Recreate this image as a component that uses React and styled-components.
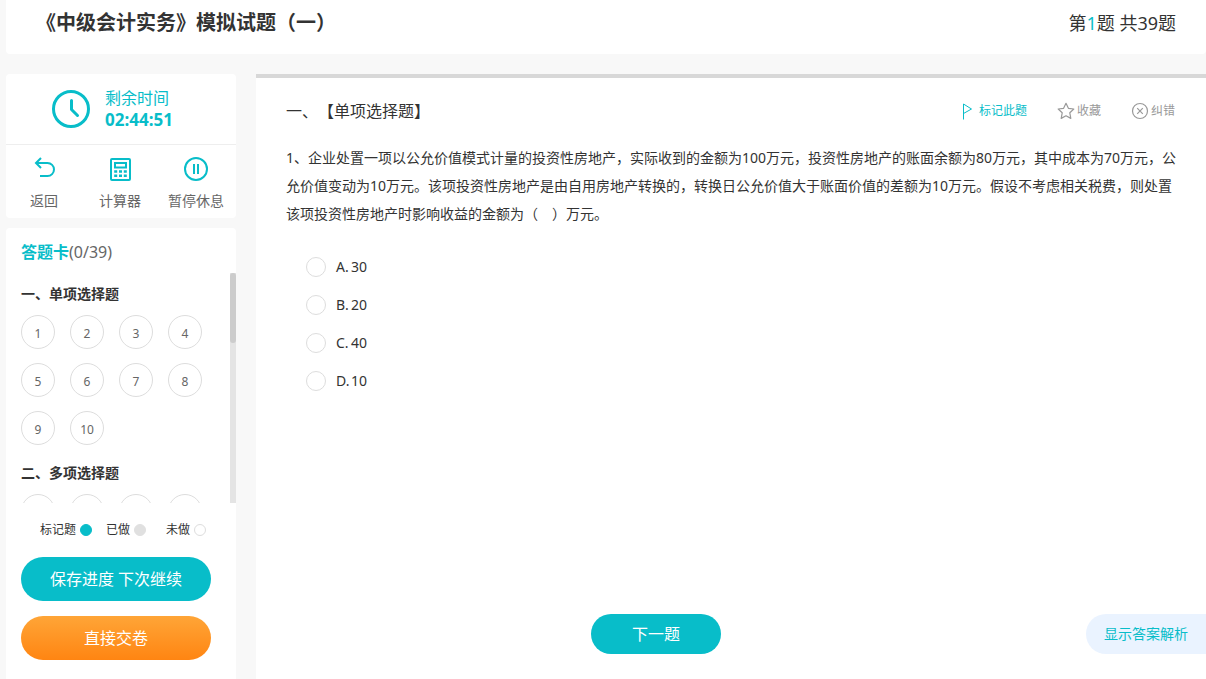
import React, { useEffect, useRef, useState } from 'react';
import styled, { createGlobalStyle } from 'styled-components';

const GlobalStyle = createGlobalStyle`
    * {
        box-sizing: border-box;
    }

    body {
        margin: 0;
        background: #f8f8f8;
        color: #333;
        font-family: "Noto Sans", "Noto Sans CJK SC", sans-serif;
        font-size: 14px;
        text-spacing-trim: space-all;
    }

    button, input {
        font-family: inherit;
        margin: 0;
    }
`;

const Page = styled.div`
    display: flex;
    flex-direction: column;
    min-height: 100vh;
    padding-left: 6px;
`;

const Header = styled.header`
    display: flex;
    justify-content: space-between;
    padding: 0 30px 8px;
    background: #fff;
    border-radius: 0 0 4px 4px;
    line-height: 46px;
`;

const Title = styled.h1`
    margin: 0;
    font-size: 20px;
    font-weight: bold;
`;

const Progress = styled.div`
    font-size: 18px;

    span {
        color: #08bdc9;
    }
`;

const Body = styled.div`
    display: flex;
    flex: 1;
    gap: 20px;
    margin-top: 20px;
`;

const Sidebar = styled.aside`
    display: flex;
    flex-direction: column;
    flex: 0 0 230px;
    gap: 10px;
`;

const Card = styled.section`
    flex: ${(props) => (props.$grow ? 1 : 'none')};
    background: #fff;
    border-radius: ${(props) => (props.$grow ? '4px 4px 0 0' : '4px')};
`;

const Timer = styled.div`
    display: flex;
    align-items: center;
    gap: 14px;
    height: 71px;
    padding-left: 45px;
    border-bottom: 1px solid #eee;
    color: #08bdc9;
    font-size: 16px;
    line-height: 21px;

    strong {
        display: block;
        font-size: 17px;
    }
`;

const Tools = styled.div`
    display: grid;
    grid-template-columns: repeat(3, 1fr);
    height: 73px;
    padding-right: 2px;
`;

const ToolButton = styled.button`
    display: flex;
    flex-direction: column;
    align-items: center;
    gap: 9px;
    padding: 11px 0 0;
    border: 0;
    background: none;
    color: #666;
    font-size: 14px;
    line-height: 20px;
    white-space: nowrap;
    cursor: pointer;

    svg {
        color: #08bdc9;
    }
`;

const CardTitle = styled.h2`
    margin: 0;
    padding: 4px 15px 0;
    color: #08bdc9;
    font-size: 16px;
    line-height: 41px;

    span {
        color: #666;
        font-weight: normal;
    }
`;

const ListWrap = styled.div`
    display: flex;
    height: 230px;
`;

const List = styled.div`
    flex: 1;
    padding: 0 0 10px 15px;
    overflow-y: scroll;
    scrollbar-width: none;
`;

const Track = styled.div`
    width: 6px;
    background: #e4e4e4;
`;

const Thumb = styled.div`
    border-radius: 3px;
    background: #ccc;
`;

const Group = styled.div`
    padding-bottom: 7px;

    h3 {
        margin: 0;
        font-size: 14px;
        line-height: 42px;
    }
`;

const Numbers = styled.div`
    display: grid;
    grid-template-columns: repeat(4, 34px);
    gap: 14px 15px;
`;

const NumberButton = styled.button`
    height: 34px;
    padding: 2px 0 0;
    border: 1px solid #ddd;
    border-radius: 50%;
    background: #fff;
    color: #666;
    font-size: 12px;
    cursor: pointer;
`;

const Legend = styled.div`
    display: grid;
    grid-template-columns: 66px 60px 40px;
    padding: 16px 0 16px 34px;
    font-size: 12px;
    line-height: 22px;
`;

const LegendItem = styled.span`
    display: flex;
    align-items: center;
    gap: 4px;
`;

const Dot = styled.i`
    width: 12px;
    height: 12px;
    border: 1px solid ${(props) => props.$border};
    border-radius: 50%;
    background: ${(props) => props.$fill};
`;

const Actions = styled.div`
    display: flex;
    flex-direction: column;
    gap: 15px;
    padding: 0 25px 19px 15px;
`;

const ActionButton = styled.button`
    height: 44px;
    padding: 0 0 2px;
    border: 0;
    border-radius: 22px;
    background: ${(props) => (props.$submit ? 'linear-gradient(#ffa537, #ff8512)' : '#08bdc9')};
    color: #fff;
    font-size: 16px;
    cursor: pointer;
`;

const Main = styled.main`
    display: flex;
    flex: 1;
    flex-direction: column;
    min-width: 0;
    border-top: 4px solid #d8d8d8;
    background: #fff;
`;

const QuestionHead = styled.div`
    display: flex;
    align-items: center;
    justify-content: space-between;
    padding: 21px 31px 21px 30px;

    h2 {
        margin: 0;
        font-size: 16px;
        font-weight: normal;
        line-height: 24px;
    }
`;

const Marks = styled.div`
    display: flex;
    gap: 30px;
`;

const MarkButton = styled.button`
    display: flex;
    align-items: center;
    gap: 2px;
    padding: 0;
    border: 0;
    background: none;
    color: ${(props) => (props.$active ? '#08bdc9' : '#999')};
    font-size: 12px;
    line-height: 18px;
    cursor: pointer;
`;

const Question = styled.p`
    margin: 0;
    padding: 0 28px 0 30px;
    line-height: 28px;
`;

const Options = styled.div`
    display: flex;
    flex-direction: column;
    gap: 18px;
    padding: 29px 50px;
`;

const Option = styled.label`
    display: flex;
    align-items: center;
    align-self: flex-start;
    gap: 10px;
    line-height: 20px;
    cursor: pointer;

    b {
        display: inline-block;
        width: 15px;
        font-weight: normal;
    }
`;

const Radio = styled.input`
    width: 20px;
    height: 20px;
    border: 1px solid #ddd;
    border-radius: 50%;
    background: #fff;
    appearance: none;

    &:checked {
        border: 6px solid #08bdc9;
    }
`;

const Footer = styled.div`
    display: grid;
    grid-template-columns: 1fr 120px;
    gap: 30px;
    margin-top: auto;
    padding-bottom: 25px;
`;

const NextButton = styled.button`
    justify-self: center;
    width: 130px;
    height: 40px;
    padding: 0 0 2px;
    border: 0;
    border-radius: 20px;
    background: #08bdc9;
    color: #fff;
    font-size: 16px;
    cursor: pointer;
`;

const AnswerButton = styled.button`
    height: 40px;
    padding: 0 0 2px;
    border: 0;
    border-radius: 20px 0 0 20px;
    background: #eaf3ff;
    color: #08bdc9;
    font-size: 14px;
    cursor: pointer;
`;

const groups = [
    { title: '一、单项选择题', start: 1, count: 10 },
    { title: '二、多项选择题', start: 11, count: 10 },
    { title: '三、判断题', start: 21, count: 10 },
    { title: '四、计算分析题', start: 31, count: 4 },
    { title: '五、综合题', start: 35, count: 5 },
];

const options = [
    { key: 'A', value: '30' },
    { key: 'B', value: '20' },
    { key: 'C', value: '40' },
    { key: 'D', value: '10' },
];

const ClockIcon = () => (
    <svg width="40" height="40" viewBox="0 0 40 40" fill="none" stroke="currentColor" strokeWidth="3">
        <circle cx="20" cy="20" r="17.5" />
        <path d="M20.5 11.5v9l6 6" strokeLinecap="round" strokeLinejoin="round" />
    </svg>
);

const BackIcon = () => (
    <svg width="26" height="26" viewBox="0 0 26 26" fill="none" stroke="currentColor" strokeWidth="2">
        <path d="M10 2 5 7l5 5M5 7h11.500a6.500 6.500 0 0 1 0 13H9" />
    </svg>
);

const CalculatorIcon = () => (
    <svg width="26" height="26" viewBox="0 0 26 26" fill="none" stroke="currentColor" strokeWidth="2">
        <rect x="4" y="3" width="19" height="21" rx="1" />
        <rect x="8" y="7" width="11" height="4.500" />
        <path d="M7.200 15.500h3M12 15.500h3M16.800 15.500h3M7.200 19.800h3M12 19.800h3M16.800 19.800h3" strokeWidth="2.600" />
    </svg>
);

const PauseIcon = () => (
    <svg width="26" height="26" viewBox="0 0 26 26" fill="none" stroke="currentColor" strokeWidth="2">
        <circle cx="13" cy="13" r="11" />
        <path d="M11 8v10M15 8v10" />
    </svg>
);

const FlagIcon = () => (
    <svg width="18" height="18" viewBox="0 0 18 18" fill="none" stroke="currentColor">
        <path d="M4.500 17.500V2L12.500 7l-8 4.500" />
    </svg>
);

const StarIcon = () => (
    <svg width="18" height="18" viewBox="0 0 18 18" fill="none" stroke="currentColor" strokeWidth="1.200" strokeLinejoin="round">
        <path d="M9 1.300l2.400 5 5.400.7-4 3.800 1 5.600L9 13.800l-4.800 2.600 1-5.600-4-3.800 5.400-.7z" />
    </svg>
);

const WrongIcon = () => (
    <svg width="18" height="18" viewBox="0 0 18 18" fill="none" stroke="currentColor" strokeWidth="1.200">
        <circle cx="9" cy="9" r="7.500" />
        <path d="M6.200 6.200l5.600 5.600M11.800 6.200l-5.600 5.600" />
    </svg>
);

function AnswerList() {
    const listRef = useRef(null);
    const [thumb, setThumb] = useState({ top: 0, height: 0 });

    const updateThumb = () => {
        const { clientHeight, scrollHeight, scrollTop } = listRef.current;
        const ratio = clientHeight / scrollHeight;
        setThumb({ top: scrollTop * ratio, height: clientHeight * ratio });
    };

    useEffect(() => {
        updateThumb();
    }, []);

    return (
        <ListWrap>
            <List ref={listRef} onScroll={updateThumb}>
                {groups.map((group) => (
                    <Group key={group.title}>
                        <h3>{group.title}</h3>
                        <Numbers>
                            {Array.from({ length: group.count }, (_, i) => (
                                <NumberButton key={i} type="button">{group.start + i}</NumberButton>
                            ))}
                        </Numbers>
                    </Group>
                ))}
            </List>
            <Track>
                <Thumb style={{ height: thumb.height, transform: `translateY(${thumb.top}px)` }} />
            </Track>
        </ListWrap>
    );
}

function App() {
    const [answer, setAnswer] = useState('');

    return (
        <Page>
            <GlobalStyle />
            <Header>
                <Title>《中级会计实务》模拟试题（一）</Title>
                <Progress>第<span>1</span>题 共39题</Progress>
            </Header>
            <Body>
                <Sidebar>
                    <Card>
                        <Timer>
                            <ClockIcon />
                            <div>
                                剩余时间
                                <strong>02:44:51</strong>
                            </div>
                        </Timer>
                        <Tools>
                            <ToolButton type="button"><BackIcon />返回</ToolButton>
                            <ToolButton type="button"><CalculatorIcon />计算器</ToolButton>
                            <ToolButton type="button"><PauseIcon />暂停休息</ToolButton>
                        </Tools>
                    </Card>
                    <Card $grow>
                        <CardTitle>答题卡<span>(0/39)</span></CardTitle>
                        <AnswerList />
                        <Legend>
                            <LegendItem>标记题<Dot $fill="#08bdc9" $border="#08bdc9" /></LegendItem>
                            <LegendItem>已做<Dot $fill="#e0e0e0" $border="#e0e0e0" /></LegendItem>
                            <LegendItem>未做<Dot $fill="#fff" $border="#ddd" /></LegendItem>
                        </Legend>
                        <Actions>
                            <ActionButton type="button">保存进度 下次继续</ActionButton>
                            <ActionButton type="button" $submit>直接交卷</ActionButton>
                        </Actions>
                    </Card>
                </Sidebar>
                <Main>
                    <QuestionHead>
                        <h2>一、【单项选择题】</h2>
                        <Marks>
                            <MarkButton type="button" $active><FlagIcon />标记此题</MarkButton>
                            <MarkButton type="button"><StarIcon />收藏</MarkButton>
                            <MarkButton type="button"><WrongIcon />纠错</MarkButton>
                        </Marks>
                    </QuestionHead>
                    <Question>
                        1、企业处置一项以公允价值模式计量的投资性房地产，实际收到的金额为100万元，投资性房地产的账面余额为80万元，其中成本为70万元，公允价值变动为10万元。该项投资性房地产是由自用房地产转换的，转换日公允价值大于账面价值的差额为10万元。假设不考虑相关税费，则处置该项投资性房地产时影响收益的金额为（　）万元。
                    </Question>
                    <Options>
                        {options.map((item) => (
                            <Option key={item.key}>
                                <Radio
                                    type="radio"
                                    name="answer"
                                    value={item.key}
                                    checked={answer === item.key}
                                    onChange={() => setAnswer(item.key)}
                                />
                                <span><b>{item.key}.</b>{item.value}</span>
                            </Option>
                        ))}
                    </Options>
                    <Footer>
                        <NextButton type="button">下一题</NextButton>
                        <AnswerButton type="button">显示答案解析</AnswerButton>
                    </Footer>
                </Main>
            </Body>
        </Page>
    );
}

export default App;
